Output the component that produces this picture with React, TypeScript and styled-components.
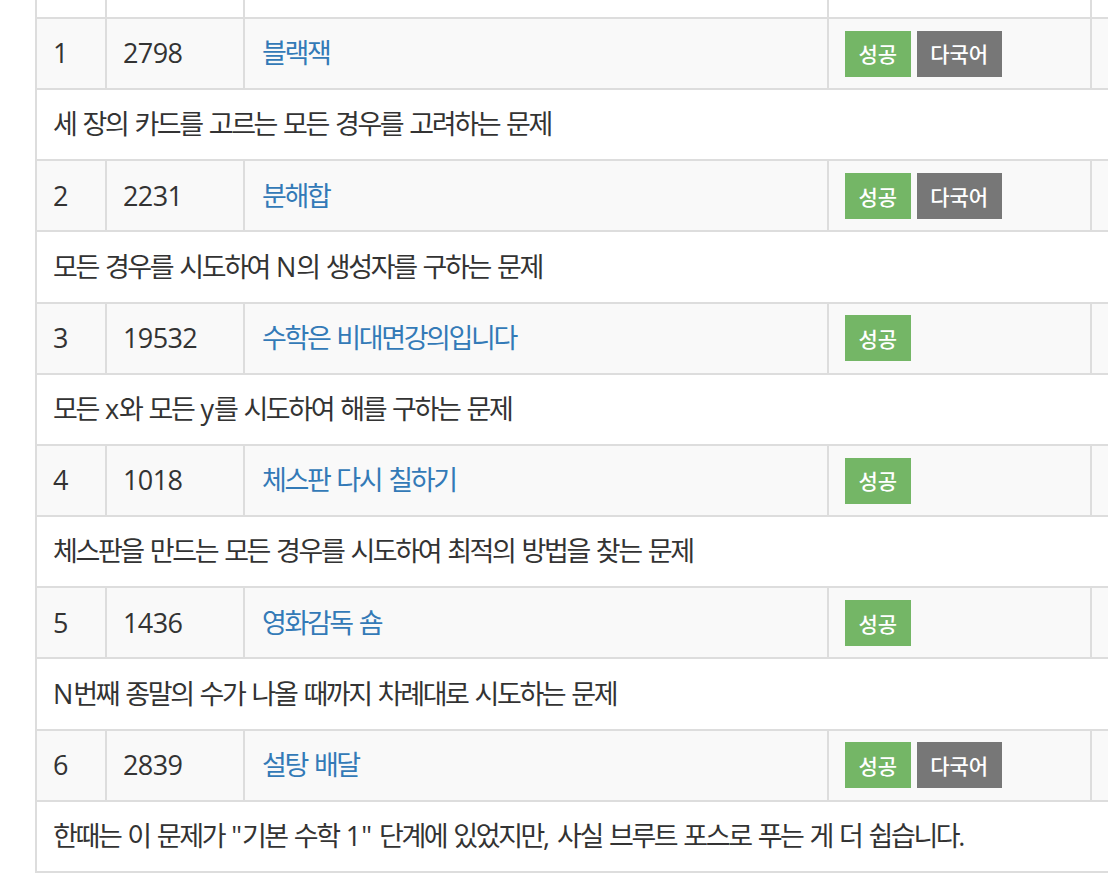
import { Fragment } from 'react';
import styled, { createGlobalStyle } from 'styled-components';

const GlobalStyle = createGlobalStyle`
  html, body {
    margin: 0;
    padding: 0;
    background: #fff;
    overflow: hidden;
  }
  body {
    font-family: "Open Sans", "Noto Sans CJK KR", sans-serif;
    font-size: 27px;
    color: #333;
  }
`;

const Page = styled.div`
  padding-left: 35px;
  width: 1160px;
`;

const Table = styled.table`
  width: 100%;
  border-collapse: collapse;
  table-layout: fixed;
`;

const HeadCell = styled.th`
  height: 17px;
  padding: 0;
  border: 2px solid #ddd;
  border-top: none;
`;

const Row = styled.tr<{ $striped?: boolean }>`
  background: ${p => (p.$striped ? '#f9f9f9' : '#fff')};
`;

const Cell = styled.td<{ $num?: boolean }>`
  border: 2px solid #ddd;
  padding: 15.3px 16px;
  line-height: 38.57px;
  vertical-align: middle;
  white-space: nowrap;
  letter-spacing: ${p => (p.$num ? '-0.6px' : 'normal')};
`;

// hangul in the original font runs narrower than Noto Sans CJK
const Hangul = styled.span`
  letter-spacing: -2.4px;
`;

const TitleLink = styled.a`
  color: #337ab7;
  text-decoration: none;
  padding-left: 1px;
`;

const Labels = styled.div`
  display: flex;
  align-items: center;
  gap: 6px;
  height: 38.57px;
`;

const Label = styled.span<{ $kind: 'success' | 'default' }>`
  display: inline-flex;
  align-items: center;
  justify-content: center;
  height: 46px;
  padding: 0 13.5px;
  flex-shrink: 0;
  font-family: "Noto Sans CJK KR", sans-serif;
  font-size: 21px;
  font-weight: 500;
  color: #fff;
  background: ${p => (p.$kind === 'success' ? '#74b666' : '#777')};
`;

const ko = (text: string) =>
  text.split(/([가-힣]+)/).map((part, i) =>
    /[가-힣]/.test(part) ? <Hangul key={i}>{part}</Hangul> : part
  );

const problems = [
  { no: 1, id: 2798, title: '블랙잭', multi: true, desc: '세 장의 카드를 고르는 모든 경우를 고려하는 문제' },
  { no: 2, id: 2231, title: '분해합', multi: true, desc: '모든 경우를 시도하여 N의 생성자를 구하는 문제' },
  { no: 3, id: 19532, title: '수학은 비대면강의입니다', multi: false, desc: '모든 x와 모든 y를 시도하여 해를 구하는 문제' },
  { no: 4, id: 1018, title: '체스판 다시 칠하기', multi: false, desc: '체스판을 만드는 모든 경우를 시도하여 최적의 방법을 찾는 문제' },
  { no: 5, id: 1436, title: '영화감독 숌', multi: false, desc: 'N번째 종말의 수가 나올 때까지 차례대로 시도하는 문제' },
  { no: 6, id: 2839, title: '설탕 배달', multi: true, desc: '한때는 이 문제가 "기본 수학 1" 단계에 있었지만, 사실 브루트 포스로 푸는 게 더 쉽습니다.' },
];

const App = () => {
  return (
    <Page>
      <GlobalStyle />
      <Table>
        <colgroup>
          <col style={{ width: 70 }} />
          <col style={{ width: 138 }} />
          <col style={{ width: 584 }} />
          <col style={{ width: 263 }} />
          <col />
        </colgroup>
        <thead>
          <tr>
            <HeadCell />
            <HeadCell />
            <HeadCell />
            <HeadCell />
            <HeadCell />
          </tr>
        </thead>
        <tbody>
          {problems.map(p => (
            <Fragment key={p.no}>
              <Row $striped>
                <Cell $num>{p.no}</Cell>
                <Cell $num>{p.id}</Cell>
                <Cell>
                  <TitleLink href="#">{ko(p.title)}</TitleLink>
                </Cell>
                <Cell>
                  <Labels>
                    <Label $kind="success">성공</Label>
                    {p.multi && <Label $kind="default">다국어</Label>}
                  </Labels>
                </Cell>
                <Cell />
              </Row>
              <Row>
                <Cell colSpan={5}>{ko(p.desc)}</Cell>
              </Row>
            </Fragment>
          ))}
        </tbody>
      </Table>
    </Page>
  );
};

export default App;
